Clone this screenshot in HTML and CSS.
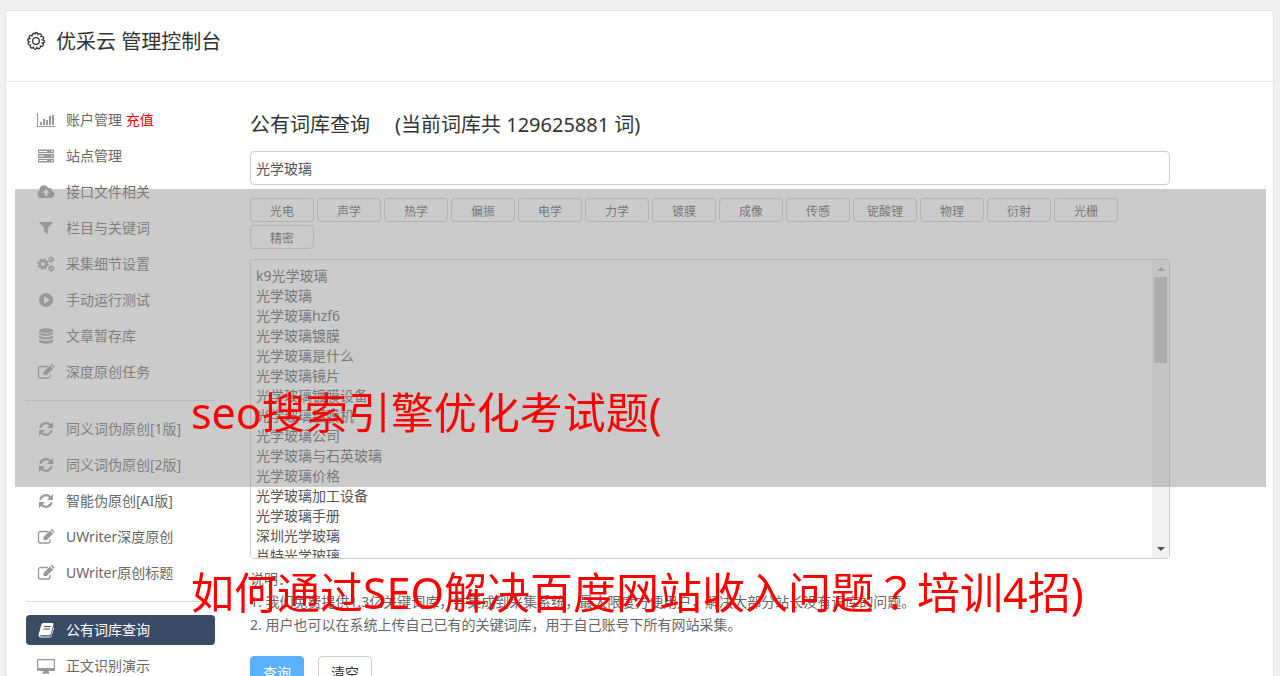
FILE: index.html
```html
<!DOCTYPE html>
<html lang="zh-CN">
<head>
    <meta charset="UTF-8">
    <meta name="viewport" content="width=device-width, initial-scale=1.0">
    <title>优采云 管理控制台</title>
    <link rel="stylesheet" href="styles.css">
</head>
<body>
    <!-- shared icons -->
    <svg class="icon-defs" aria-hidden="true">
        <symbol id="i-refresh" viewBox="0 0 16 16">
            <path d="M2.400 6.800A5.800 5.800 0 0 1 12.400 4.200M13.600 9.200A5.800 5.800 0 0 1 3.600 11.800" fill="none" stroke="currentColor" stroke-width="2.200"/>
            <path d="M15 1v6H9zM1 15V9h6z"/>
        </symbol>
        <symbol id="i-edit" viewBox="0 0 18 16">
            <path d="M11 2.500H3.500a2 2 0 0 0-2 2v7.500a2 2 0 0 0 2 2H11a2 2 0 0 0 2-2V10" fill="none" stroke="currentColor" stroke-width="1.300"/>
            <path d="M6.500 7.900L12.900 1.500l3.200 3.200L9.700 11.100H6.500zM13.600.8l.7-.5q.5-.4 1 0l2 2q.4.500 0 1l-.5.700z"/>
        </symbol>
    </svg>

    <div class="panel">
        <div class="panel-header">
            <svg class="gear" viewBox="0 0 20 20"><path d="M10 1.500Q11.300 1.500 11.800 3.400 13.500 2 14.900 3 15.800 3.700 15 5.300 17.200 5.200 17.700 6.700 18 8 16.500 8.800 18.500 9.200 18.500 10.500 18.400 11.800 16.500 12 17.900 13.400 17 14.700 16.200 15.800 14.500 15.100 14.600 17 13.200 17.700 11.900 18.100 11 16.500 10.300 18.300 9 18.300 7.700 18.100 7.500 16.300 6 17.500 4.700 16.600 3.800 15.700 4.600 14.200 2.700 14.200 2.100 12.900 1.700 11.600 3.300 10.800 1.500 10.200 1.600 8.800 2 7.500 3.800 7.500 2.600 6 3.500 4.800 4.600 3.800 6.100 4.800 6.200 2.800 7.500 2.300 8.700 2 9.200 3.400 9.300 1.500 10 1.500z"/><circle cx="10" cy="10" r="3.300"/></svg>
            <h1>优采云 管理控制台</h1>
        </div>

        <div class="panel-body">
            <nav class="sidebar">
                <ul class="menu">
                    <li><a href="#"><svg viewBox="0 0 18 16"><path d="M0 1h1v13h17v1H0zM3 10h2v3H3zM6 7h2v6H6zM9 8h2v5H9zM12 4h2v9h-2zM15 3h2v10h-2z"/></svg>账户管理 <span class="recharge">充值</span></a></li>
                    <li><a href="#"><svg viewBox="0 0 16 16"><path fill-rule="evenodd" d="M0 1.500h16v3.800H0zM0 6.100h16v3.800H0zM0 10.700h16v3.800H0zM1 2.900v1h8v-1zM1 7.500v1h5v-1zM1 12.100v1h8v-1zM13 2.900v1h1.500v-1zM13 7.500v1h1.500v-1zM13 12.100v1h1.500v-1z"/></svg>站点管理</a></li>
                    <li><a href="#"><svg viewBox="0 0 18 16"><path fill-rule="evenodd" d="M4 14a4 4 0 0 1-1.500-7.500A4.600 4.600 0 0 1 11.300 4.200 2.600 2.600 0 0 1 15 7.200 3.500 3.500 0 0 1 14.300 14zM9 5L5.500 8.700h2.400V12h2.400V8.700h2.400z"/></svg>接口文件相关</a></li>
                    <li><a href="#"><svg viewBox="0 0 16 16"><path d="M2 2h12q.8.200.4 1L9.800 8v6.500L6.200 12V8L1.600 3q-.4-.8.4-1z"/></svg>栏目与关键词</a></li>
                    <li><a href="#"><svg viewBox="0 0 18 16"><g fill="none" stroke="currentColor"><circle cx="6" cy="8" r="3.300" stroke-width="2.400"/><circle cx="6" cy="8" r="5" stroke-width="1.600" stroke-dasharray="2 1.927"/><circle cx="14.300" cy="3.500" r="1.800" stroke-width="1.400"/><circle cx="14.300" cy="3.500" r="2.700" stroke-width="1" stroke-dasharray="1.400 1.427"/><circle cx="14.300" cy="12.500" r="1.800" stroke-width="1.400"/><circle cx="14.300" cy="12.500" r="2.700" stroke-width="1" stroke-dasharray="1.400 1.427"/></g></svg>采集细节设置</a></li>
                    <li><a href="#"><svg viewBox="0 0 16 16"><path fill-rule="evenodd" d="M8 1a7 7 0 1 1 0 14A7 7 0 0 1 8 1zM6 4.300v7.400L12 8z"/></svg>手动运行测试</a></li>
                    <li><a href="#"><svg viewBox="0 0 16 16"><ellipse cx="8" cy="2.600" rx="7" ry="2.400"/><path d="M1 4.200q7 3.600 14 0v1.500q-1 2-7 2.100-6-.1-7-2.100zM1 7.700q7 3.600 14 0v1.500q-1 2-7 2.100-6-.1-7-2.100zM1 11.300q7 3.600 14 0v1.800q-1 2.600-7 2.700-6-.1-7-2.700z"/></svg>文章暂存库</a></li>
                    <li><a href="#"><svg viewBox="0 0 18 16"><use href="#i-edit"/></svg>深度原创任务</a></li>
                </ul>
                <ul class="menu">
                    <li><a href="#"><svg viewBox="0 0 16 16"><use href="#i-refresh"/></svg>同义词伪原创[1版]</a></li>
                    <li><a href="#"><svg viewBox="0 0 16 16"><use href="#i-refresh"/></svg>同义词伪原创[2版]</a></li>
                    <li><a href="#"><svg viewBox="0 0 16 16"><use href="#i-refresh"/></svg>智能伪原创[AI版]</a></li>
                    <li><a href="#"><svg viewBox="0 0 18 16"><use href="#i-edit"/></svg>UWriter深度原创</a></li>
                    <li><a href="#"><svg viewBox="0 0 18 16"><use href="#i-edit"/></svg>UWriter原创标题</a></li>
                </ul>
                <ul class="menu">
                    <li class="active"><a href="#"><svg viewBox="0 0 16 16"><path fill-rule="evenodd" d="M5.200 1h9.200q1.400.2 1.100 1.600L12.800 12q-.4 1.300-1.800 1.300H3q-.9.100-.8.700.2.600 1 .6h8.800q.9-.1 1.200-1L15.600 5q.7.500.4 1.500L13.500 14q-.5 1.500-2 1.500H2.800Q.5 15.300.5 13L3.300 2.700Q3.800 1.200 5.200 1zM6.300 4l-.3 1h6.500l.3-1zM5.600 6.500l-.3 1h6.500l.3-1z"/></svg>公有词库查询</a></li>
                    <li><a href="#"><svg viewBox="0 0 18 16"><path fill-rule="evenodd" d="M1.200 1h15.600q1.200.1 1.200 1.200v9.600q0 1.200-1.200 1.200H11.500l.5 1.600.6.4v.8H5.400V15l.6-.4.5-1.600H1.200Q0 12.900 0 11.800V2.200Q0 1.100 1.200 1zM1.300 2.300v7.700h15.400V2.300z"/></svg>正文识别演示</a></li>
                </ul>
            </nav>

            <main class="content">
                <h2><label for="keyword">公有词库查询</label><span class="total">(当前词库共 129625881 词)</span></h2>
                <input type="text" class="field" id="keyword" value="光学玻璃">
                <div class="tags">
                    <button type="button">光电</button>
                    <button type="button">声学</button>
                    <button type="button">热学</button>
                    <button type="button">偏振</button>
                    <button type="button">电学</button>
                    <button type="button">力学</button>
                    <button type="button">镀膜</button>
                    <button type="button">成像</button>
                    <button type="button">传感</button>
                    <button type="button">铌酸锂</button>
                    <button type="button">物理</button>
                    <button type="button">衍射</button>
                    <button type="button">光栅</button>
                    <button type="button">精密</button>
                </div>
                <div class="results-box">
                    <textarea class="field results" aria-label="查询结果">k9光学玻璃
光学玻璃
光学玻璃hzf6
光学玻璃镀膜
光学玻璃是什么
光学玻璃镜片
光学玻璃镀膜设备
光学玻璃镀膜机
光学玻璃公司
光学玻璃与石英玻璃
光学玻璃价格
光学玻璃加工设备
光学玻璃手册
深圳光学玻璃
肖特光学玻璃</textarea>
                    <div class="scrollbar" aria-hidden="true">
                        <svg class="arrow-up" viewBox="0 0 8 4"><path d="M0 4l4-4 4 4z"/></svg>
                        <div class="thumb"></div>
                        <svg class="arrow-down" viewBox="0 0 8 4"><path d="M0 0l4 4 4-4z"/></svg>
                    </div>
                </div>
                <div class="tips">
                    说明：<br>
                    1. 我们免费提供1.3亿关键词库，并集成到采集系统，最大限度方便用户，解决大部分站长没有词库的问题。<br>
                    2. 用户也可以在系统上传自己已有的关键词库，用于自己账号下所有网站采集。
                </div>
                <div class="actions">
                    <button type="submit" class="btn btn-primary">查询</button>
                    <button type="reset" class="btn">清空</button>
                </div>
            </main>
        </div>
    </div>

    <div class="shade"></div>
    <div class="caption">
        <div>seo搜索引擎优化考试题(</div>
        <div>如何通过SEO解决百度网站收入问题<span class="mark" lang="zh-TW">？</span>培训4招)</div>
    </div>
</body>
</html>
```
FILE: styles.css
```css
* {
    box-sizing: border-box;
}
body {
    position: relative;
    height: 100vh;
    margin: 0;
    padding: 10px 6px 0 5px;
    overflow: hidden;
    background-color: #f0f0f0;
    color: #666;
    font-family: "Noto Sans", "Noto Sans CJK SC", sans-serif;
    font-size: 14px;
    line-height: 20px;
}
button, input, textarea {
    font-family: inherit;
    font-size: 14px;
    line-height: 20px;
}
h1, h2 {
    margin: 0;
    color: #333;
    font-size: 20px;
    font-weight: normal;
    line-height: 30px;
}
.icon-defs {
    display: none;
}
.panel {
    background-color: #fff;
    border: 1px solid #e5e5e5;
    border-radius: 4px;
}
.panel-header {
    display: flex;
    gap: 10px;
    height: 71px;
    padding: 16px 20px 0;
    border-bottom: 1px solid #e5e5e5;
}
.gear {
    width: 20px;
    height: 20px;
    margin-top: 4px;
    fill: none;
    stroke: #333;
    stroke-width: 1.3;
}
.panel-body {
    display: flex;
    gap: 35px;
    padding: 23px 103px 20px 20px;
}

/* sidebar */
.sidebar {
    flex: 0 0 189px;
}
.menu {
    margin: 0;
    padding: 0 0 13px;
    list-style: none;
}
.menu + .menu {
    padding-top: 13px;
    border-top: 1px solid #ddd;
}
.menu li + li {
    margin-top: 6px;
}
.menu a {
    display: flex;
    align-items: center;
    height: 30px;
    padding: 0 10px;
    border-radius: 4px;
    color: #666;
    text-decoration: none;
    white-space: pre;
}
.menu svg {
    width: 20px;
    height: 16px;
    margin-right: 10px;
    fill: currentColor;
    color: #999;
}
.menu .active a {
    background-color: #3a4b66;
    color: #fff;
}
.menu .active svg {
    color: #fff;
}
.recharge {
    color: #f00;
}

/* content */
.content {
    flex: 1;
    min-width: 0;
    padding-top: 5px;
}
.total {
    margin-left: 25px;
}
.field {
    display: block;
    width: 100%;
    padding: 6px 5px;
    border: 1px solid #ccc;
    border-radius: 4px;
    background-color: #fff;
    color: #555;
    outline: none;
}
input.field {
    height: 34px;
    margin-top: 11px;
}
.tags {
    display: flex;
    flex-wrap: wrap;
    gap: 3px;
    margin: 13px 0 10px;
}
.tags button {
    width: 64px;
    height: 24px;
    padding: 3px 0 0;
    border: 1px solid #ccc;
    border-radius: 4px;
    background-color: #fff;
    color: #555;
    font-size: 12px;
}
.results-box {
    position: relative;
}
.results {
    height: 300px;
    padding-right: 22px;
    resize: none;
    scrollbar-width: none;
}
.scrollbar {
    position: absolute;
    top: 1px;
    right: 1px;
    bottom: 1px;
    display: flex;
    flex-direction: column;
    align-items: center;
    width: 17px;
    padding: 7px 0;
    border-radius: 0 3px 3px 0;
    background-color: #f1f1f1;
}
.scrollbar svg {
    flex: none;
    width: 8px;
    height: 4px;
}
.arrow-up {
    fill: #a3a3a3;
}
.arrow-down {
    margin-top: auto;
    fill: #505050;
}
.thumb {
    width: 13px;
    height: 86px;
    margin-top: 6px;
    background-color: #c1c1c1;
}
.tips {
    margin-top: 8px;
    line-height: 23px;
}
.actions {
    display: flex;
    gap: 14px;
    margin-top: 20px;
}
.btn {
    height: 34px;
    padding: 0 12px;
    border: 1px solid #ccc;
    border-radius: 4px;
    background-color: #fff;
    color: #333;
}
.btn-primary {
    border-color: #5aafff;
    background-color: #5aafff;
    color: #fff;
}

/* caption over the page */
.shade {
    position: absolute;
    top: 189px;
    left: 15px;
    right: 14px;
    height: 298px;
    background-color: rgba(151, 151, 151, 0.5);
    pointer-events: none;
}
.caption {
    position: absolute;
    top: 323px;
    left: 191px;
    color: #f00;
    font-size: 43px;
    line-height: 180px;
    white-space: nowrap;
    pointer-events: none;
}
.mark {
    font-family: "Noto Sans CJK TC", sans-serif;
    line-height: 1;
}
```
